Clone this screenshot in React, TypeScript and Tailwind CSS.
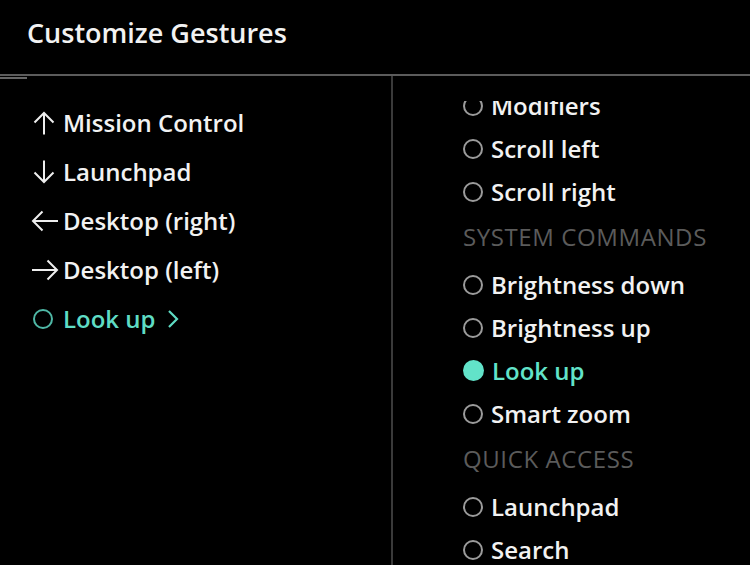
import React from "react"

type Dir = "up" | "down" | "left" | "right"

function Arrow(props: { dir: Dir }) {
  const s = { fill: "none", stroke: "#eeeeee", strokeWidth: 2 }
  if (props.dir === "up" || props.dir === "down") {
    return (
      <svg width="22" height="24" viewBox="0 0 22 24" className={props.dir === "down" ? "rotate-180" : ""}>
        <path d="M11 2 V23.5 M1.5 11.5 L11 2 L20.5 11.5" {...s} />
      </svg>
    )
  }
  return (
    <svg width="28" height="22" viewBox="0 0 28 22" className={props.dir === "right" ? "rotate-180" : ""}>
      <path d="M2 11 H27 M11.5 1.5 L2 11 L11.5 20.5" {...s} />
    </svg>
  )
}

function Radio(props: { on?: boolean }) {
  return props.on ? (
    <span className="block w-[21px] h-[21px] rounded-full bg-[#62e3c9] shrink-0" />
  ) : (
    <span className="block w-[20px] h-[20px] rounded-full border-2 border-[#9b9b9b] shrink-0" />
  )
}

const gestures: { dir: Dir; label: string; pad: string; slot: string }[] = [
  { dir: "up", label: "Mission Control", pad: "pl-[33px]", slot: "w-[30px]" },
  { dir: "down", label: "Launchpad", pad: "pl-[33px]", slot: "w-[30px]" },
  { dir: "left", label: "Desktop (right)", pad: "pl-[31px]", slot: "w-[32px]" },
  { dir: "right", label: "Desktop (left)", pad: "pl-[31px]", slot: "w-[32px]" },
]

type Row = { kind: "item"; label: string; on?: boolean } | { kind: "head"; label: string }

const actions: Row[] = [
  { kind: "item", label: "Modifiers" },
  { kind: "item", label: "Scroll left" },
  { kind: "item", label: "Scroll right" },
  { kind: "head", label: "SYSTEM COMMANDS" },
  { kind: "item", label: "Brightness down" },
  { kind: "item", label: "Brightness up" },
  { kind: "item", label: "Look up", on: true },
  { kind: "item", label: "Smart zoom" },
  { kind: "head", label: "QUICK ACCESS" },
  { kind: "item", label: "Launchpad" },
  { kind: "item", label: "Search" },
  { kind: "item", label: "Spotlight" },
]

export default function App() {
  return (
    <div className="w-[750px] h-[565px] bg-black text-[#f2f2f2] overflow-hidden flex flex-col font-['Open_Sans',sans-serif]">
      <div className="h-[74px] shrink-0 flex items-center pl-[27px] pb-[8px]">
        <h1 className="text-[27px] font-semibold">Customize Gestures</h1>
      </div>
      <div className="h-[2px] bg-[#5c5c5c] shrink-0" />
      <div className="flex flex-1 min-h-0">
        <div className="w-[391px] shrink-0 flex flex-col">
          <div className="w-[27px] h-[2px] mt-[1px] bg-[#666666]" />
          <div className="pt-[19px] flex flex-col">
            {gestures.map((g) => (
              <div key={g.label} className={"h-[49px] flex items-center " + g.pad}>
                <span className={"shrink-0 flex " + g.slot}>
                  <Arrow dir={g.dir} />
                </span>
                <span className="text-[24px] font-semibold">{g.label}</span>
              </div>
            ))}
            <div className="h-[49px] flex items-center pl-[33px] text-[#5fdcc4]">
              <span className="block w-[20px] h-[20px] rounded-full border-[2.5px] border-[#4fb8a6] mr-[10px]" />
              <span className="text-[24px] font-semibold">Look up</span>
              <svg width="14" height="20" viewBox="0 0 14 20" className="ml-[10px]">
                <path d="M3 2 L11 10 L3 18" fill="none" stroke="#5fdcc4" strokeWidth="2.2" />
              </svg>
            </div>
          </div>
        </div>
        <div className="w-[2px] bg-[#3a3a3a] shrink-0" />
        <div className="flex-1 min-w-0 overflow-hidden pt-[25px]">
          <div className="h-full overflow-hidden">
            <div className="-mt-[17px] pl-[70px] flex flex-col">
              {actions.map((a) =>
                a.kind === "head" ? (
                  <div key={a.label} className="h-[50px] flex items-center pb-[2px] text-[24px] tracking-[0.6px] text-[#5b5b5b]">
                    {a.label}
                  </div>
                ) : (
                  <div
                    key={a.label}
                    className={"h-[43px] flex items-center gap-[8px] " + (a.on ? "text-[#62e3c9]" : "")}
                  >
                    <Radio on={a.on} />
                    <span className="text-[24px] font-semibold">{a.label}</span>
                  </div>
                )
              )}
            </div>
          </div>
        </div>
      </div>
    </div>
  )
}
